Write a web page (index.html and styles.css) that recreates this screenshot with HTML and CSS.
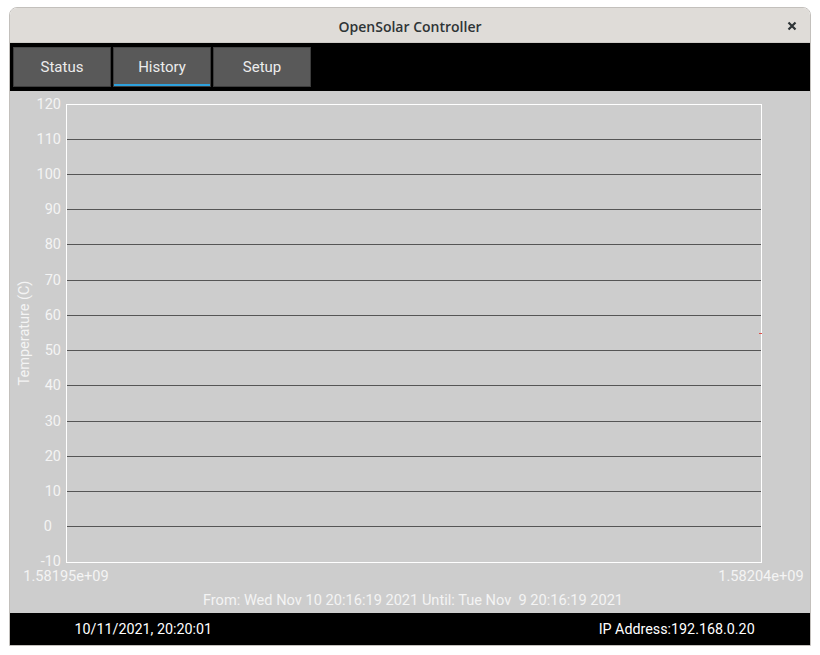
FILE: index.html
```html
<!DOCTYPE html>
<html>
<head>
<meta charset="utf-8">
<title>OpenSolar Controller</title>
<link rel="stylesheet" href="styles.css">
</head>
<body>
<div class="window">
  <div class="titlebar">
    <span class="title">OpenSolar Controller</span>
    <svg class="close" width="10" height="10" viewBox="0 0 10 10"><path d="M1.5 1.5 L8.5 8.5 M8.5 1.5 L1.5 8.5"/></svg>
  </div>
  <div class="tabbar">
    <div class="tab">Status</div>
    <div class="tab active">History</div>
    <div class="tab">Setup</div>
  </div>
  <div class="content">
    <svg class="chart" width="800" height="522" viewBox="0 0 800 522">
      <g class="grid">
        <line x1="56" x2="751" y1="48.5" y2="48.5"/>
        <line x1="56" x2="751" y1="83.5" y2="83.5"/>
        <line x1="56" x2="751" y1="118.5" y2="118.5"/>
        <line x1="56" x2="751" y1="153.5" y2="153.5"/>
        <line x1="56" x2="751" y1="189.5" y2="189.5"/>
        <line x1="56" x2="751" y1="224.5" y2="224.5"/>
        <line x1="56" x2="751" y1="259.5" y2="259.5"/>
        <line x1="56" x2="751" y1="294.5" y2="294.5"/>
        <line x1="56" x2="751" y1="330.5" y2="330.5"/>
        <line x1="56" x2="751" y1="365.5" y2="365.5"/>
        <line x1="56" x2="751" y1="400.5" y2="400.5"/>
        <line x1="56" x2="751" y1="435.5" y2="435.5"/>
      </g>
      <rect class="frame" x="56.5" y="13.5" width="695" height="458"/>
      <rect class="mark" x="749" y="242" width="3" height="1"/>
      <g class="ylabels">
        <text x="51" y="18">120</text>
        <text x="51" y="53">110</text>
        <text x="51" y="88">100</text>
        <text x="51" y="123">90</text>
        <text x="51" y="158">80</text>
        <text x="51" y="194">70</text>
        <text x="51" y="229">60</text>
        <text x="51" y="264">50</text>
        <text x="51" y="299">40</text>
        <text x="51" y="335">30</text>
        <text x="51" y="370">20</text>
        <text x="51" y="405">10</text>
        <text x="42" y="440">0</text>
        <text x="51" y="475">-10</text>
      </g>
      <text class="ytitle" x="0" y="0" transform="translate(19 242) rotate(-90)">Temperature (C)</text>
      <text class="xlabel" x="56" y="490">1.58195e+09</text>
      <text class="xlabel" x="751" y="490">1.58204e+09</text>
      <text class="range" x="403" y="514" xml:space="preserve">From: Wed Nov 10 20:16:19 2021 Until: Tue Nov  9 20:16:19 2021</text>
    </svg>
  </div>
  <div class="footer">
    <span class="cell">10/11/2021, 20:20:01</span>
    <span class="cell"></span>
    <span class="cell">IP Address:192.168.0.20</span>
  </div>
</div>
</body>
</html>
```

FILE: styles.css
```css
html, body {
  margin: 0;
  padding: 0;
  background: #ffffff;
}

.window {
  margin: 7px 0 0 9px;
  width: 802px;
  border: 1px solid #c3c0bc;
  border-radius: 8px 8px 0 0;
  overflow: hidden;
  box-sizing: border-box;
  font-family: Roboto, "Liberation Sans", sans-serif;
}

.titlebar {
  height: 35px;
  background: #dfdcd8;
  border-bottom: 1px solid #cfccc8;
  box-sizing: border-box;
  display: flex;
  align-items: center;
  justify-content: center;
  padding-top: 3px;
  position: relative;
}

.title {
  font-family: "Open Sans", "Noto Sans", sans-serif;
  font-weight: 600;
  font-size: 14px;
  color: #2e3436;
}

.close {
  position: absolute;
  right: 13px;
  top: 13px;
}

.close path {
  stroke: #2e3436;
  stroke-width: 2.2;
  stroke-linecap: butt;
  fill: none;
}

.tabbar {
  height: 48px;
  background: #000000;
  display: flex;
  gap: 2px;
  padding: 4px 3px;
  box-sizing: border-box;
}

.tab {
  width: 98px;
  height: 40px;
  box-sizing: border-box;
  background: #595959;
  border: 1px solid #3d3d3d;
  border-top-color: #474747;
  color: #ececec;
  font-size: 15px;
  display: flex;
  align-items: center;
  justify-content: center;
  padding-bottom: 1px;
}

.tab.active {
  box-shadow: inset 0 -2px 0 #2ea1dc;
}

.content {
  height: 522px;
  background: #cdcdcd;
}

.chart {
  display: block;
  font-family: Roboto, "Liberation Sans", sans-serif;
}

.grid line {
  stroke: #555555;
  stroke-width: 1;
}

.frame {
  fill: none;
  stroke: #ffffff;
  stroke-width: 1;
}

.mark {
  fill: #e0504a;
}

.ylabels text {
  fill: #f4f4f4;
  font-size: 14.5px;
  text-anchor: end;
}

.ytitle {
  fill: #f4f4f4;
  font-size: 14.5px;
  text-anchor: middle;
}

.xlabel {
  fill: #f4f4f4;
  font-size: 14.6px;
  text-anchor: middle;
}

.range {
  fill: #f4f4f4;
  font-size: 14.6px;
  text-anchor: middle;
}

.footer {
  height: 32px;
  background: #000000;
  display: grid;
  grid-template-columns: 1fr 1fr 1fr;
  align-items: center;
  color: #ffffff;
  font-size: 14.3px;
}

.cell {
  text-align: center;
  padding-bottom: 1px;
}
```
